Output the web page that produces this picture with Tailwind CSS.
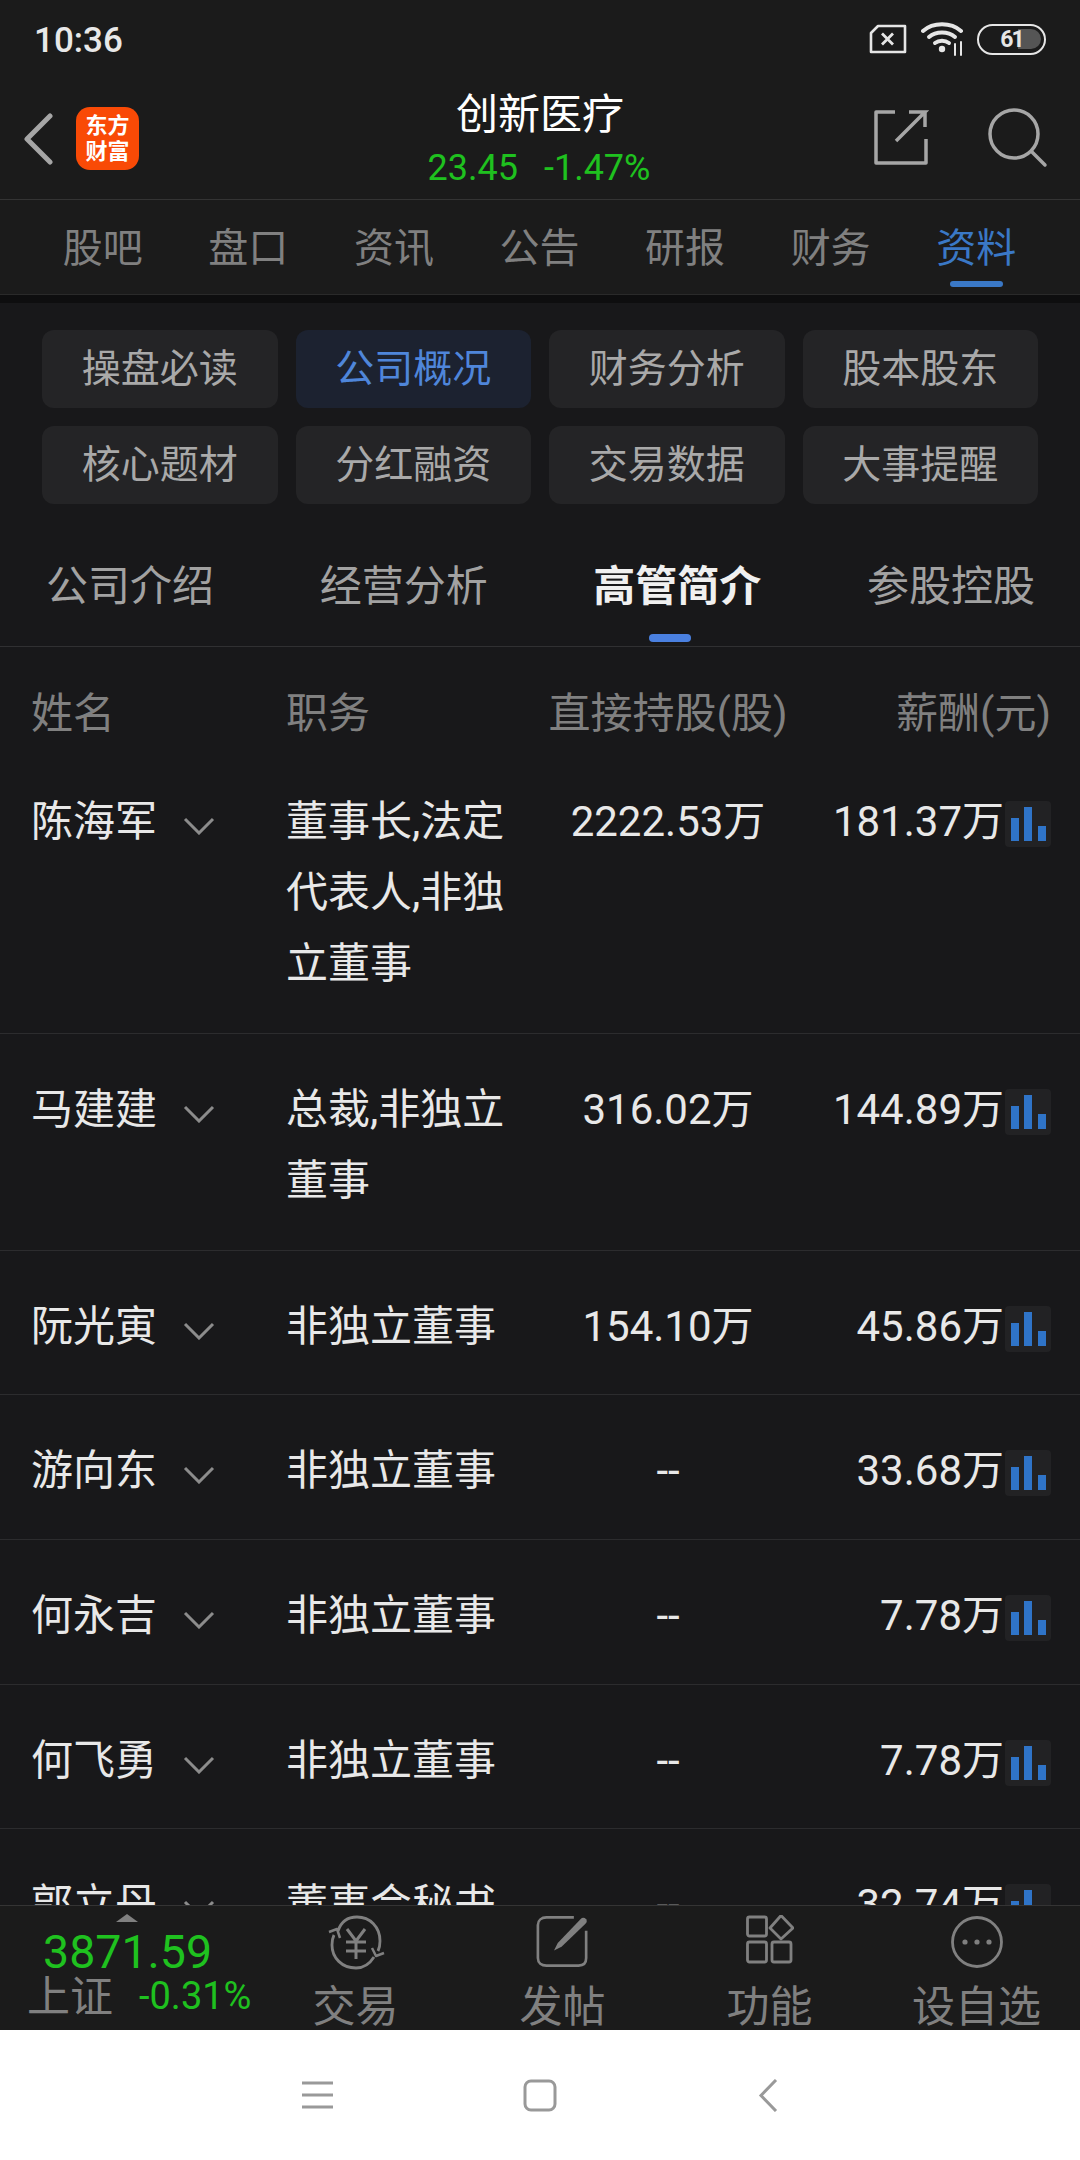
<!DOCTYPE html>
<html lang="zh">
<head>
<meta charset="utf-8">
<script src="https://cdn.jsdelivr.net/npm/@tailwindcss/browser@4"></script>
</head>
<body class="m-0 bg-[#18181a]">
<div class="w-[1080px] h-[2160px] flex flex-col overflow-hidden font-['Roboto','Noto_Sans_CJK_SC',sans-serif] bg-[#18181a]">

  <!-- status bar + header -->
  <div class="h-[200px] shrink-0 bg-[#1b1b1b] border-b border-[#343434] relative">
    <div class="h-[80px] pl-[34px] pr-[34px] flex items-center justify-between">
      <span class="text-[35px] font-medium text-[#e8e8e8] leading-none">10:36</span>
      <div class="flex items-center -mt-[2px]">
        <svg width="38" height="30" viewBox="0 0 38 30" fill="none" stroke="#e6e6e6" stroke-width="2.6"><path d="M9 2H36V28H2V9Z" stroke-linejoin="round"/><path d="M13 9.500L24 20.500M24 9.500L13 20.500" stroke-width="2.800"/></svg>
        <svg class="ml-[14px]" width="44" height="34" viewBox="0 0 44 34" fill="none" stroke="#e6e6e6" stroke-linecap="round"><path d="M2 9C12 0 30 0 40 9" stroke-width="4"/><path d="M8 15C15 9 27 9 34 15" stroke-width="4"/><path d="M14 21C18 18 24 18 28 21" stroke-width="4"/><circle cx="21" cy="27" r="3.200" fill="#e6e6e6" stroke="none"/><path d="M34 22V33M40 20V33" stroke-width="2"/></svg>
        <div class="ml-[12px] w-[69px] h-[31px] rounded-full border-[2.500px] border-[#e6e6e6] relative flex items-center justify-center">
          <div class="absolute left-[39px] top-[3px] w-[23px] h-[20px] bg-[#555] rounded-r-full"></div>
          <span class="relative text-[23px] font-bold text-[#e6e6e6] leading-none tracking-[-2px]">61</span>
        </div>
      </div>
    </div>
    <div class="h-[119px] relative">
      <svg class="absolute left-[24px] top-[33px]" width="30" height="52" viewBox="0 0 30 52" fill="none" stroke="#a6a6a6" stroke-width="5" stroke-linecap="round" stroke-linejoin="round"><path d="M26 3L3 26L26 49"/></svg>
      <div class="absolute left-[76px] top-[27px] w-[63px] h-[63px] rounded-[14px] bg-[#f94a06] flex flex-col items-center justify-center text-white text-[22px] leading-[26px] font-bold">
        <span>东方</span><span>财富</span>
      </div>
      <div class="absolute left-0 right-0 top-[12px] flex flex-col items-center">
        <span class="text-[42px] leading-[46px] text-white">创新医疗</span>
        <div class="flex gap-[26px] text-[36px] leading-[44px] text-[#1fc11f] mt-[8px] mr-[2px]"><span>23.45</span><span>-1.47%</span></div>
      </div>
      <svg class="absolute left-[873px] top-[29px]" width="56" height="56" viewBox="0 0 56 56" fill="none" stroke="#a6a6a6" stroke-width="3.500"><path d="M22 3H3V54H53V30" stroke-linejoin="round"/><path d="M52 3V18M36 3H52L23 32" stroke-width="3.500"/></svg>
      <svg class="absolute left-[988px] top-[28px]" width="60" height="60" viewBox="0 0 60 60" fill="none" stroke="#a6a6a6" stroke-width="3.500" stroke-linecap="round"><circle cx="26" cy="26" r="24"/><path d="M44 44L57 57"/></svg>
    </div>
  </div>

  <!-- main tabs -->
  <div class="h-[94px] shrink-0 bg-[#1b1b1b] pl-[30px] pr-[31px] grid grid-cols-7 text-[40px] text-[#808080] relative">
    <div class="flex justify-center pt-[21px] leading-[56px]">股吧</div>
    <div class="flex justify-center pt-[21px] leading-[56px]">盘口</div>
    <div class="flex justify-center pt-[21px] leading-[56px]">资讯</div>
    <div class="flex justify-center pt-[21px] leading-[56px]">公告</div>
    <div class="flex justify-center pt-[21px] leading-[56px]">研报</div>
    <div class="flex justify-center pt-[21px] leading-[56px]">财务</div>
    <div class="flex justify-center pt-[21px] leading-[56px] text-[#3a78c6] relative">资料
      <div class="absolute left-[47px] top-[81px] w-[53px] h-[6px] rounded-full bg-[#3a78c6]"></div>
    </div>
  </div>
  <div class="h-[9px] shrink-0 bg-[#0e0e0f] border-t border-[#2a2a2a]"></div>

  <!-- chips -->
  <div class="pt-[27px] pl-[42px] pr-[42px] grid grid-cols-4 gap-x-[18px] gap-y-[18px] text-[39px] text-[#a9a9a9] shrink-0">
    <div class="h-[78px] rounded-[12px] bg-[#242426] flex items-center justify-center">操盘必读</div>
    <div class="h-[78px] rounded-[12px] bg-[#1c2230] flex items-center justify-center text-[#4f86da]">公司概况</div>
    <div class="h-[78px] rounded-[12px] bg-[#242426] flex items-center justify-center">财务分析</div>
    <div class="h-[78px] rounded-[12px] bg-[#242426] flex items-center justify-center">股本股东</div>
    <div class="h-[78px] rounded-[12px] bg-[#242426] flex items-center justify-center">核心题材</div>
    <div class="h-[78px] rounded-[12px] bg-[#242426] flex items-center justify-center">分红融资</div>
    <div class="h-[78px] rounded-[12px] bg-[#242426] flex items-center justify-center">交易数据</div>
    <div class="h-[78px] rounded-[12px] bg-[#242426] flex items-center justify-center">大事提醒</div>
  </div>

  <!-- sub tabs -->
  <div class="h-[143px] shrink-0 pl-[46px] pr-[45px] flex justify-between border-b border-[#303032] text-[42px] text-[#a2a2a2]">
    <div class="pt-[53px] leading-[60px]">公司介绍</div>
    <div class="pt-[53px] leading-[60px]">经营分析</div>
    <div class="pt-[53px] leading-[60px] font-bold text-[#f0f0f0] relative">高管简介
      <div class="absolute left-[56px] top-[130px] w-[42px] h-[8px] rounded-full bg-[#4a80e0]"></div>
    </div>
    <div class="pt-[53px] leading-[60px]">参股控股</div>
  </div>

  <!-- table -->
  <div class="flex-1 min-h-0 overflow-hidden text-[42px] text-[#e8e8e8] leading-[71px]">
    <div class="grid grid-cols-[255px_233px_298px_1fr] pl-[31px] pr-[29px] pt-[31px] text-[#808080]">
      <div>姓名</div><div>职务</div><div class="text-center">直接持股(股)</div><div class="text-right">薪酬(元)</div>
    </div>

    <div class="grid grid-cols-[255px_233px_298px_1fr] pl-[31px] pr-[29px] pt-[37px] pb-[34px] border-b border-[#2c2c2e]">
      <div class="flex items-start">陈海军<svg class="ml-[26px] mt-[31px]" width="32" height="18" viewBox="0 0 32 18" fill="none" stroke="#8c8c8c" stroke-width="3"><path d="M2 2L16 16L30 2"/></svg></div>
      <div>董事长,法定代表人,非独立董事</div><div class="text-center">2222.53万</div>
      <div class="flex justify-end items-start">181.37万<svg class="mt-[15px] ml-[1px]" width="46" height="46" viewBox="0 0 46 46"><rect width="46" height="46" rx="4" fill="#222224"/><path fill="#2f74c8" d="M6 17H14V40H6ZM19 6H27V40H19ZM33 25H41V40H33Z"/></svg></div>
    </div>

    <div class="grid grid-cols-[255px_233px_298px_1fr] pl-[31px] pr-[29px] pt-[40px] pb-[34px] border-b border-[#2c2c2e]">
      <div class="flex items-start">马建建<svg class="ml-[26px] mt-[31px]" width="32" height="18" viewBox="0 0 32 18" fill="none" stroke="#8c8c8c" stroke-width="3"><path d="M2 2L16 16L30 2"/></svg></div>
      <div>总裁,非独立董事</div><div class="text-center">316.02万</div>
      <div class="flex justify-end items-start">144.89万<svg class="mt-[15px] ml-[1px]" width="46" height="46" viewBox="0 0 46 46"><rect width="46" height="46" rx="4" fill="#222224"/><path fill="#2f74c8" d="M6 17H14V40H6ZM19 6H27V40H19ZM33 25H41V40H33Z"/></svg></div>
    </div>

    <div class="grid grid-cols-[255px_233px_298px_1fr] pl-[31px] pr-[29px] pt-[40px] pb-[32px] border-b border-[#2c2c2e]">
      <div class="flex items-start">阮光寅<svg class="ml-[26px] mt-[31px]" width="32" height="18" viewBox="0 0 32 18" fill="none" stroke="#8c8c8c" stroke-width="3"><path d="M2 2L16 16L30 2"/></svg></div>
      <div>非独立董事</div><div class="text-center">154.10万</div>
      <div class="flex justify-end items-start">45.86万<svg class="mt-[15px] ml-[1px]" width="46" height="46" viewBox="0 0 46 46"><rect width="46" height="46" rx="4" fill="#222224"/><path fill="#2f74c8" d="M6 17H14V40H6ZM19 6H27V40H19ZM33 25H41V40H33Z"/></svg></div>
    </div>

    <div class="grid grid-cols-[255px_233px_298px_1fr] pl-[31px] pr-[29px] pt-[40px] pb-[33px] border-b border-[#2c2c2e]">
      <div class="flex items-start">游向东<svg class="ml-[26px] mt-[31px]" width="32" height="18" viewBox="0 0 32 18" fill="none" stroke="#8c8c8c" stroke-width="3"><path d="M2 2L16 16L30 2"/></svg></div>
      <div>非独立董事</div><div class="text-center">--</div>
      <div class="flex justify-end items-start">33.68万<svg class="mt-[15px] ml-[1px]" width="46" height="46" viewBox="0 0 46 46"><rect width="46" height="46" rx="4" fill="#222224"/><path fill="#2f74c8" d="M6 17H14V40H6ZM19 6H27V40H19ZM33 25H41V40H33Z"/></svg></div>
    </div>

    <div class="grid grid-cols-[255px_233px_298px_1fr] pl-[31px] pr-[29px] pt-[40px] pb-[33px] border-b border-[#2c2c2e]">
      <div class="flex items-start">何永吉<svg class="ml-[26px] mt-[31px]" width="32" height="18" viewBox="0 0 32 18" fill="none" stroke="#8c8c8c" stroke-width="3"><path d="M2 2L16 16L30 2"/></svg></div>
      <div>非独立董事</div><div class="text-center">--</div>
      <div class="flex justify-end items-start">7.78万<svg class="mt-[15px] ml-[1px]" width="46" height="46" viewBox="0 0 46 46"><rect width="46" height="46" rx="4" fill="#222224"/><path fill="#2f74c8" d="M6 17H14V40H6ZM19 6H27V40H19ZM33 25H41V40H33Z"/></svg></div>
    </div>

    <div class="grid grid-cols-[255px_233px_298px_1fr] pl-[31px] pr-[29px] pt-[40px] pb-[32px] border-b border-[#2c2c2e]">
      <div class="flex items-start">何飞勇<svg class="ml-[26px] mt-[31px]" width="32" height="18" viewBox="0 0 32 18" fill="none" stroke="#8c8c8c" stroke-width="3"><path d="M2 2L16 16L30 2"/></svg></div>
      <div>非独立董事</div><div class="text-center">--</div>
      <div class="flex justify-end items-start">7.78万<svg class="mt-[15px] ml-[1px]" width="46" height="46" viewBox="0 0 46 46"><rect width="46" height="46" rx="4" fill="#222224"/><path fill="#2f74c8" d="M6 17H14V40H6ZM19 6H27V40H19ZM33 25H41V40H33Z"/></svg></div>
    </div>

    <div class="grid grid-cols-[255px_233px_298px_1fr] pl-[31px] pr-[29px] pt-[40px] pb-[33px] border-b border-[#2c2c2e]">
      <div class="flex items-start">郭立丹<svg class="ml-[26px] mt-[31px]" width="32" height="18" viewBox="0 0 32 18" fill="none" stroke="#8c8c8c" stroke-width="3"><path d="M2 2L16 16L30 2"/></svg></div>
      <div class="whitespace-nowrap">董事会秘书</div><div class="text-center">--</div>
      <div class="flex justify-end items-start">32.74万<svg class="mt-[15px] ml-[1px]" width="46" height="46" viewBox="0 0 46 46"><rect width="46" height="46" rx="4" fill="#222224"/><path fill="#2f74c8" d="M6 17H14V40H6ZM19 6H27V40H19ZM33 25H41V40H33Z"/></svg></div>
    </div>
  </div>

  <!-- bottom bar -->
  <div class="h-[125px] shrink-0 bg-[#1b1b1b] border-t border-[#343434] relative">
    <svg class="absolute left-[116px] top-[8px]" width="22" height="8" viewBox="0 0 22 8"><path d="M11 0L22 8H0Z" fill="#808080"/></svg>
    <div class="absolute left-[43px] top-[24px] text-[46.500px] leading-[44px] text-[#1fc11f]">3871.59</div>
    <div class="absolute left-[27px] top-[68px] text-[43px] leading-[46px] text-[#808080]">上证</div>
    <div class="absolute left-[139px] top-[67px] text-[38px] leading-[46px] text-[#1fc11f]">-0.31%</div>
    <div class="ml-[252px] grid grid-cols-4 h-full">
      <div class="flex flex-col items-center">
        <svg class="mt-[9px]" width="60" height="56" viewBox="0 0 60 56" fill="none" stroke="#808080" stroke-width="2.800"><path d="M12 16C15 7 22 2 31 2C44 2 54 12 54 26C54 30 53 34 52 36"/><path d="M48 42C43 50 37 53 30 53C16 53 6 43 6 30C6 26 7 22 8 20"/><path d="M3 17L11 14L14 23M58 38L50 41L46 33" stroke-width="2.500" stroke-linejoin="round"/><path d="M21 14L30 26L39 14M20 27H40M20 36H40M30 26V44" stroke-width="3"/></svg>
        <span class="text-[43px] leading-[54px] text-[#808080] mt-[9px]">交易</span>
      </div>
      <div class="flex flex-col items-center">
        <svg class="mt-[9px]" width="53" height="54" viewBox="0 0 56 56" fill="none" stroke="#808080" stroke-width="2.800"><path d="M40 2H11C6 2 2 5 2 10V45C2 50 6 53 11 53H45C50 53 53 50 53 45V16" stroke-linejoin="round"/><path d="M19 37L23 29L47 4C49 2 51 2 53 4C54 6 54 7 52 9L27 33Z" fill="#808080" stroke="none"/></svg>
        <span class="text-[43px] leading-[54px] text-[#808080] mt-[11px]">发帖</span>
      </div>
      <div class="flex flex-col items-center">
        <svg class="mt-[9px]" width="48" height="50" viewBox="0 0 48 50" fill="none" stroke="#808080" stroke-width="2.800" stroke-linejoin="round"><rect x="1.500" y="2" width="19" height="19" rx="2"/><path d="M35 0.500L47 13L35 24L24 13Z"/><rect x="1.500" y="27" width="19" height="20" rx="2"/><rect x="26" y="27" width="19" height="20" rx="2"/></svg>
        <span class="text-[43px] leading-[54px] text-[#808080] mt-[15px]">功能</span>
      </div>
      <div class="flex flex-col items-center">
        <svg class="mt-[10px]" width="52" height="52" viewBox="0 0 52 52" fill="none" stroke="#808080" stroke-width="2.800"><circle cx="26" cy="26" r="24.500"/><circle cx="14" cy="26" r="2.600" fill="#808080" stroke="none"/><circle cx="26" cy="26" r="2.600" fill="#808080" stroke="none"/><circle cx="38" cy="26" r="2.600" fill="#808080" stroke="none"/></svg>
        <span class="text-[43px] leading-[54px] text-[#808080] mt-[12px]">设自选</span>
      </div>
    </div>
  </div>

  <!-- nav -->
  <div class="h-[130px] shrink-0 bg-white relative">
    <svg class="absolute left-[301px] top-[51px]" width="32" height="28" viewBox="0 0 32 28" fill="none" stroke="#999" stroke-width="3"><path d="M1 2H32M1 14H32M1 26H32"/></svg>
    <svg class="absolute left-[523px] top-[49px]" width="34" height="33" viewBox="0 0 34 33" fill="none" stroke="#999" stroke-width="3"><rect x="2" y="2" width="30" height="29" rx="6"/></svg>
    <svg class="absolute left-[758px] top-[49px]" width="20" height="33" viewBox="0 0 20 33" fill="none" stroke="#999" stroke-width="3"><path d="M18 1L3 16.500L18 32"/></svg>
  </div>
</div>
</body>
</html>
